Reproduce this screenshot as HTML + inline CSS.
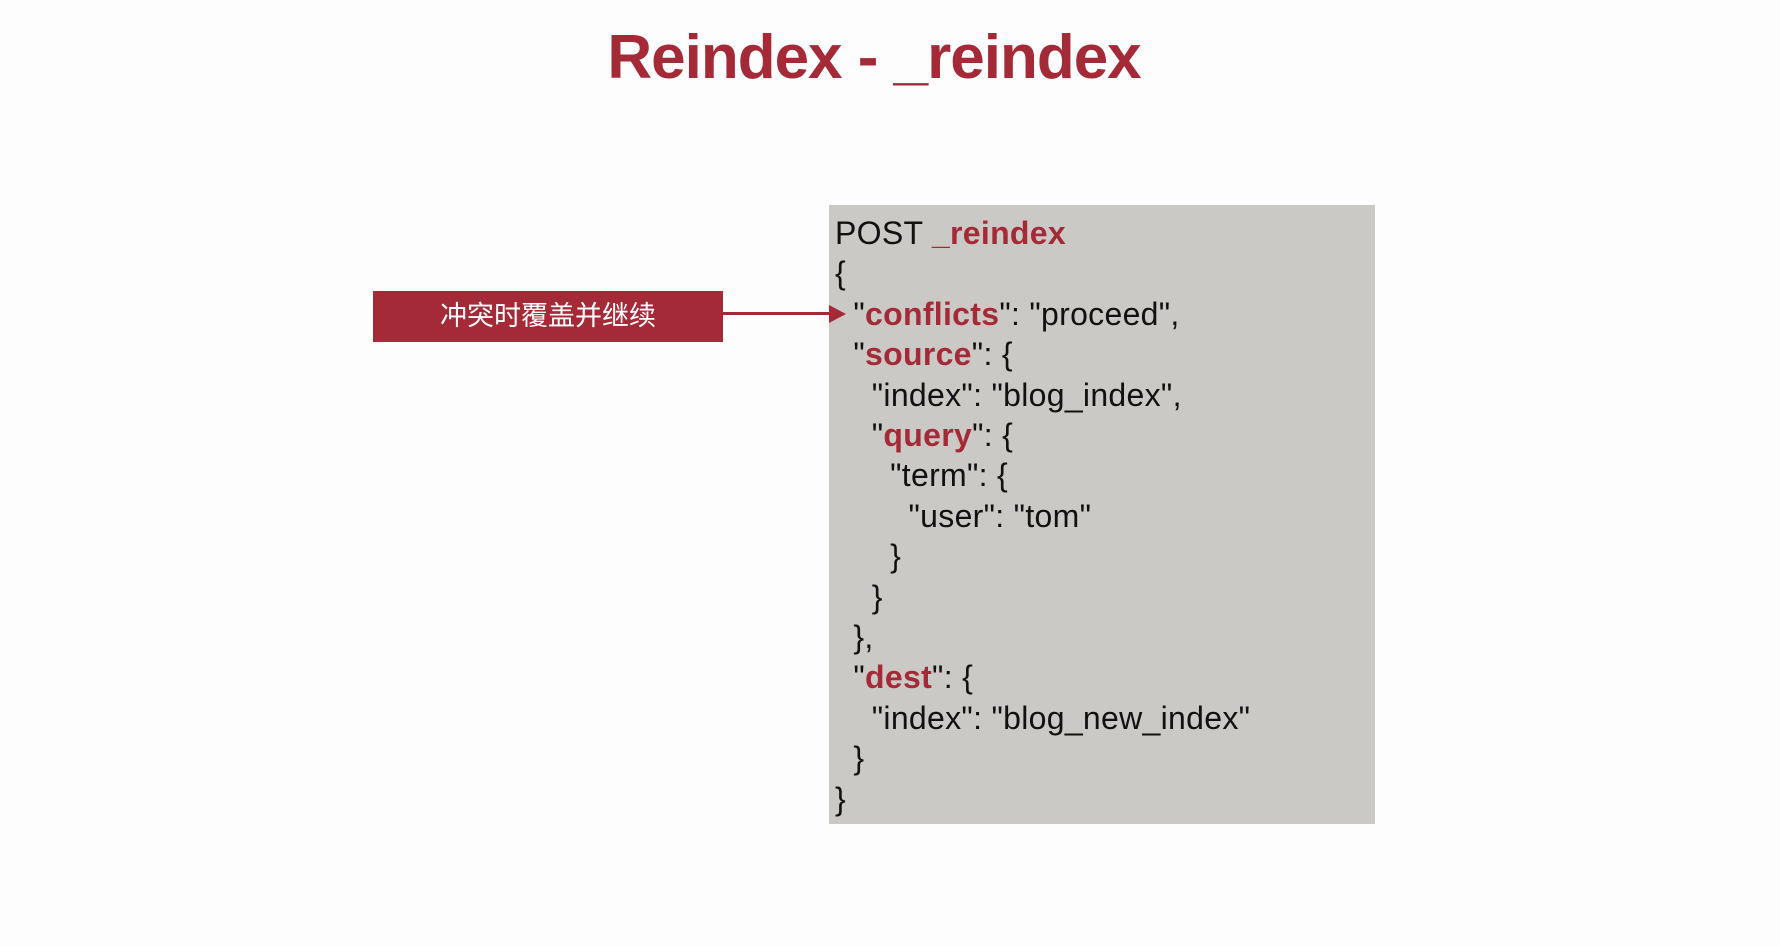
<!DOCTYPE html>
<html><head><meta charset="utf-8"><style>
html,body{margin:0;padding:0;}
body{width:1780px;height:946px;background:#fdfdfd;position:relative;overflow:hidden;font-family:"Liberation Sans","Noto Sans CJK SC",sans-serif;}
.title{position:absolute;left:-16px;width:1780px;top:18px;text-align:center;color:#a52a38;font-weight:bold;font-size:62px;line-height:80px;}
.title span{display:inline-block;letter-spacing:-1px;}
.box{position:absolute;left:829px;top:205px;width:546px;height:619px;background:#cbc9c5;}
.code{position:absolute;left:835px;top:213px;font-size:32px;line-height:40.4px;color:#111;white-space:pre;letter-spacing:0.3px;}
.r{color:#a52a38;font-weight:bold;}
.label{position:absolute;left:373px;top:291px;width:350px;height:51px;background:#a52a38;color:#fff;font-size:27px;line-height:51px;text-align:center;font-family:"Liberation Sans","Noto Sans CJK SC",sans-serif;}
.line{position:absolute;left:723px;top:312px;width:108px;height:3px;background:#a52a38;}
.tri{position:absolute;left:829px;top:305px;width:0;height:0;border-top:9px solid transparent;border-bottom:9px solid transparent;border-left:17px solid #a52a38;}
</style></head><body>
<div class="title"><span>Reindex - _reindex</span></div>
<div class="box"></div>
<div class="code">POST <span class="r">_reindex</span>
{
  "<span class="r">conflicts</span>": "proceed",
  "<span class="r">source</span>": {
    "index": "blog_index",
    "<span class="r">query</span>": {
      "term": {
        "user": "tom"
      }
    }
  },
  "<span class="r">dest</span>": {
    "index": "blog_new_index"
  }
}</div>
<div class="label">冲突时覆盖并继续</div>
<div class="line"></div>
<div class="tri"></div>
</body></html>
